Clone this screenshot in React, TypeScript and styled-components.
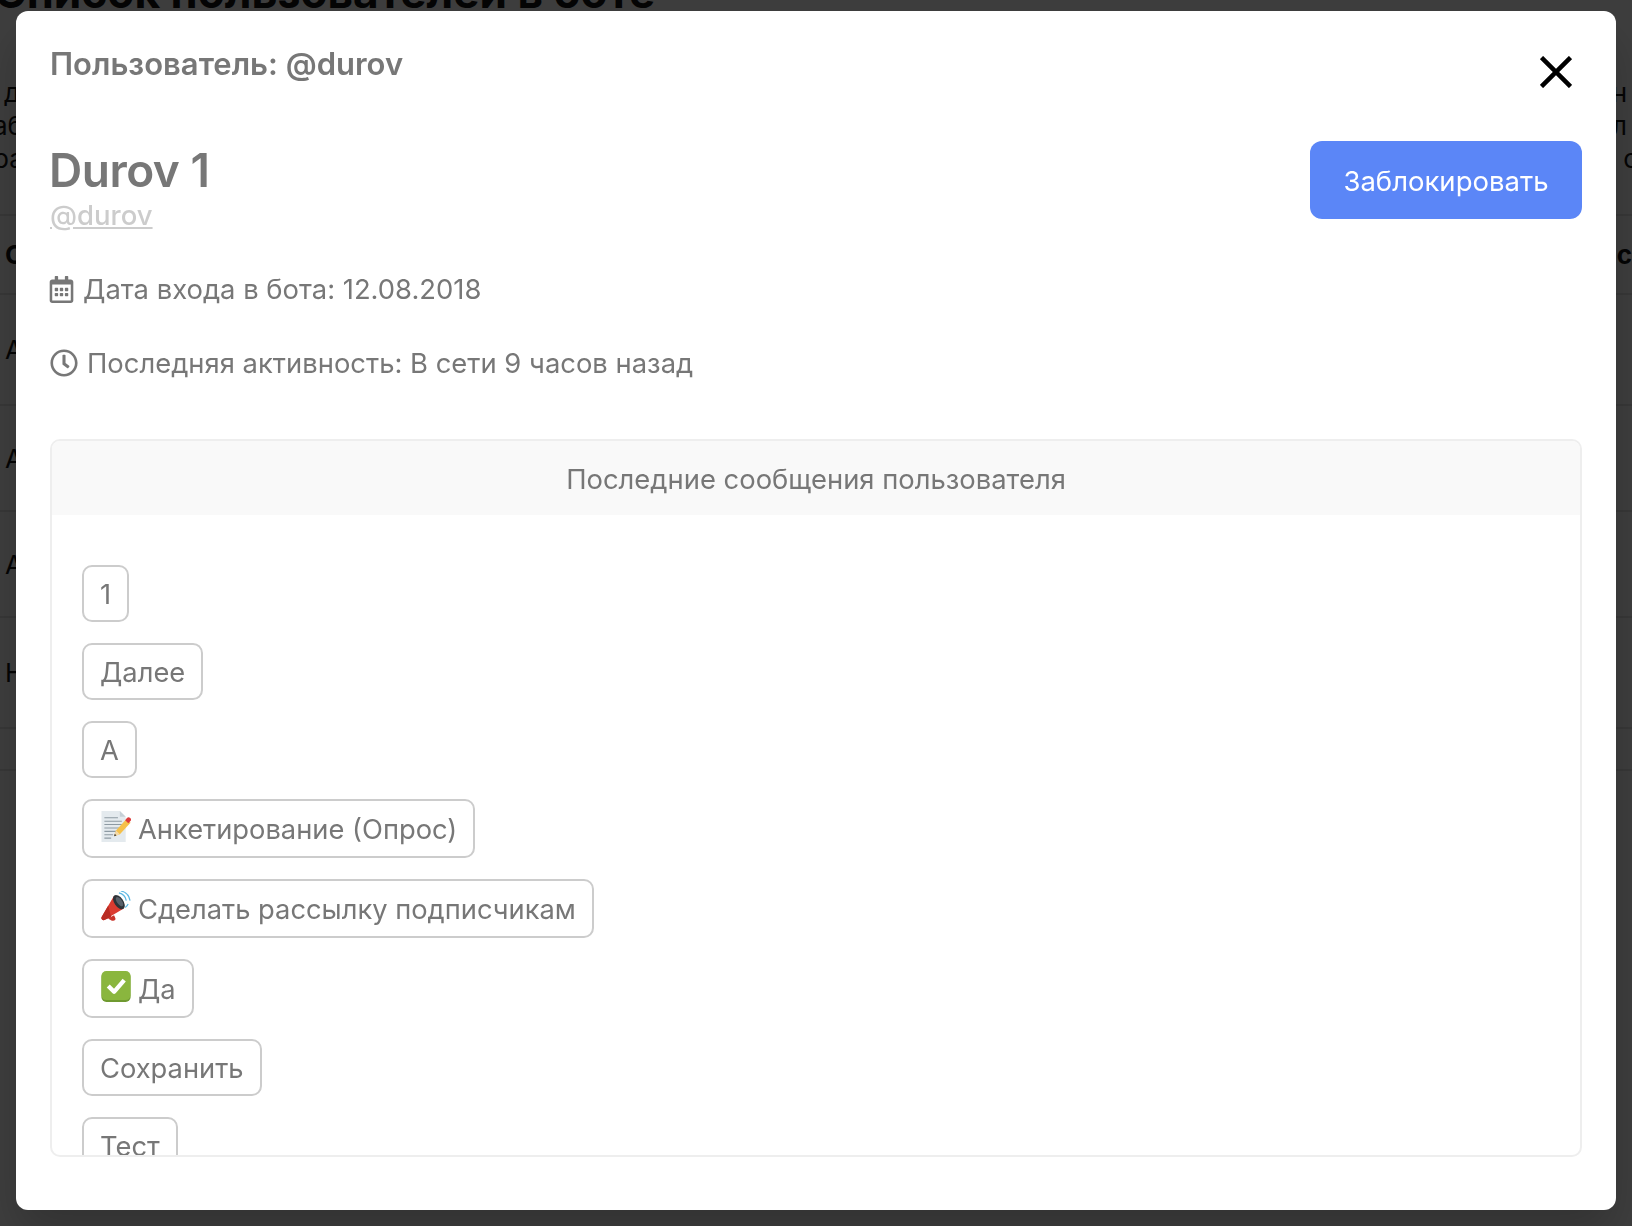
import styled, { createGlobalStyle } from "styled-components";
import { FaRegCalendarAlt, FaRegClock } from "react-icons/fa";

// ── Global ────────────────────────────────────────────────────────────────────

const GlobalStyle = createGlobalStyle`
  html, body {
    margin: 0;
    padding: 0;
    height: 100%;
    overflow: hidden;
    background: #f4f4f4;
    font-family: Inter, "Noto Sans", sans-serif;
  }
  * {
    box-sizing: border-box;
  }
`;

// ── Page behind the modal ─────────────────────────────────────────────────────

const Page = styled.div`
  width: 1632px;
  height: 1226px;
  overflow: hidden;
  background: #f4f4f4;
  color: #111;
`;

const PageTitle = styled.h1`
  margin: -36px 0 0 -6px;
  font-size: 44.2px;
  line-height: 56px;
  font-weight: 700;
  white-space: nowrap;
`;

const Intro = styled.div`
  margin-top: 56px;
  height: 138px;
  display: flex;
  flex-direction: column;
`;

const IntroLine = styled.div<{ $left: number; $right: number }>`
  display: flex;
  justify-content: space-between;
  height: 33px;
  margin: 0 ${({ $right }) => $right}px 0 ${({ $left }) => $left}px;
  font-size: 26px;
  line-height: 33px;
`;

const TableRow = styled.div<{ $height: number; $head?: boolean }>`
  display: flex;
  justify-content: space-between;
  align-items: center;
  height: ${({ $height }) => $height}px;
  padding-left: 5px;
  border-top: 2px solid #dcdcdc;
  font-size: 26px;
  font-weight: ${({ $head }) => ($head ? 700 : 400)};
`;

const Backdrop = styled.div`
  position: fixed;
  inset: 0;
  background: rgba(0, 0, 0, 0.75);
  padding: 11px 16px 16px;
  display: flex;
`;

// ── Modal ─────────────────────────────────────────────────────────────────────

const Modal = styled.div`
  flex: 1;
  min-width: 0;
  display: flex;
  flex-direction: column;
  padding: 34px 34px 53px;
  background: #fff;
  border-radius: 12px;
  box-shadow: 0 24px 48px rgba(0, 0, 0, 0.2);
  color: #777;
`;

const ModalHeader = styled.div`
  display: flex;
  justify-content: space-between;
  align-items: flex-start;
  height: 56px;
  margin-bottom: 40px;
  padding-right: 10px;
`;

const ModalTitle = styled.div`
  font-size: 31px;
  line-height: 38px;
  font-weight: 600;
`;

const CloseButton = styled.button`
  width: 32px;
  height: 32px;
  margin-top: 11px;
  padding: 0;
  border: none;
  background: none;
  display: flex;
`;

const Profile = styled.div`
  display: flex;
  justify-content: space-between;
  align-items: flex-start;
  height: 128px;
`;

const NameBlock = styled.div`
  display: flex;
  flex-direction: column;
  align-items: flex-start;
  padding-top: 1px;
`;

const Name = styled.div`
  margin-left: -1px;
  font-size: 46px;
  line-height: 56px;
  font-weight: 600;
  letter-spacing: -0.5px;
`;

const Handle = styled.a`
  font-size: 27.5px;
  line-height: 34px;
  font-weight: 500;
  color: #ccc;
  text-decoration: underline;
`;

const BlockButton = styled.button`
  width: 272px;
  height: 78px;
  padding: 2px 0 0;
  border: none;
  border-radius: 12px;
  background: #5b86f7;
  color: #fff;
  font-family: inherit;
  font-size: 27.5px;
`;

const InfoRow = styled.div<{ $after: number }>`
  display: flex;
  align-items: center;
  gap: 9px;
  height: 40px;
  margin-bottom: ${({ $after }) => $after}px;
  font-size: 27.4px;
  color: #777;
`;

const CalendarIcon = styled(FaRegCalendarAlt)`
  flex: none;
  width: 27px;
  height: 27px;
  margin: 0 -1px 0 -2px;
`;

const ClockIcon = styled(FaRegClock)`
  flex: none;
  width: 28px;
  height: 28px;
`;

const Panel = styled.div`
  flex: 1;
  min-height: 0;
  overflow: hidden;
  border: 2px solid #eee;
  border-radius: 10px;
`;

const PanelHead = styled.div`
  height: 74px;
  padding-top: 2px;
  display: flex;
  align-items: center;
  justify-content: center;
  background: #f9f9f9;
  font-size: 27.4px;
  color: #777;
`;

const ChipList = styled.div`
  display: flex;
  flex-direction: column;
  align-items: flex-start;
  gap: 21px;
  padding: 50px 30px 0;
`;

const Chip = styled.div<{ $emoji?: boolean }>`
  display: inline-flex;
  align-items: center;
  gap: 7px;
  height: ${({ $emoji }) => ($emoji ? 59 : 57)}px;
  padding: 2px 16px 0;
  border: 2px solid #ccc;
  border-radius: 10px;
  font-size: 27.3px;
  line-height: 51px;
  white-space: nowrap;
`;

const EmojiBox = styled.svg`
  flex: none;
  width: 30px;
  height: 31px;
  margin: -7px 0 0 1px;
`;

// ── Drawn emoji ───────────────────────────────────────────────────────────────

function MemoEmoji() {
  return (
    <EmojiBox viewBox="0 0 30 32">
      <path d="M0 0h19l6 6v26H0z" fill="#e4eaee" />
      <path d="M19 0l6 6h-6z" fill="#c6d0d6" />
      <path
        d="M3 7h14M3 10.5h18M3 14h18M3 17.5h16M3 21h12M3 24.5h9M3 28h7"
        stroke="#8d9aa3"
        strokeWidth="1.1"
      />
      <path d="M13 26l2-6 11-12 4 4-11 12z" fill="#f6c14a" />
      <path d="M13 26l2-6 4 4z" fill="#f3d9a8" />
      <path d="M13 26l.8-2.4 1.6 1.6z" fill="#333" />
      <path d="M24.5 9.5l1.8-2.2a2.4 2.4 0 0 1 3.4 3.4l-2 2z" fill="#dd3b3b" />
    </EmojiBox>
  );
}

function MegaphoneEmoji() {
  return (
    <EmojiBox viewBox="0 0 30 32">
      <path d="M0 27L13 5l10 13-20 12a2.4 2.4 0 0 1-3-3z" fill="#db3b30" />
      <path d="M0 27l7-12 3 12-7 3a2.4 2.4 0 0 1-3-3z" fill="#b92c23" />
      <path d="M7 28l6-3 1.4 3c.6 1.6-1.2 3-3 2.6-1.6-.4-3.2-1.2-4.4-2.6z" fill="#c9332a" />
      <ellipse cx="18" cy="11.5" rx="4.6" ry="8.4" transform="rotate(-35 18 11.5)" fill="#2e3338" />
      <ellipse cx="18.6" cy="11" rx="2.6" ry="5.6" transform="rotate(-35 18.6 11)" fill="#59616a" />
      <path
        d="M18 2c4 .8 6.8 3.6 7.6 8M20 0c5 1 8.5 4.5 9.5 10M24.5 17c1.4-.8 2.4-2 3-3.5"
        fill="none"
        stroke="#5db8e3"
        strokeWidth="1.3"
      />
    </EmojiBox>
  );
}

function CheckEmoji() {
  return (
    <EmojiBox viewBox="0 0 30 32">
      <rect y="1" width="30" height="31" rx="5" fill="#6f9a30" />
      <rect y="0" width="30" height="30" rx="5" fill="#8ab63e" />
      <path d="M7 15.5l6 6L23.5 9.5" fill="none" stroke="#fff" strokeWidth="4.4" strokeLinejoin="round" />
    </EmojiBox>
  );
}

// ── App ───────────────────────────────────────────────────────────────────────

export default function App() {
  return (
    <>
      <GlobalStyle />
      <Page>
        <PageTitle>Список пользователей в боте</PageTitle>
        <Intro>
          <IntroLine $left={4} $right={5}>
            <span>д</span>
            <span>н</span>
          </IntroLine>
          <IntroLine $left={-7} $right={5}>
            <span>аб</span>
            <span>л</span>
          </IntroLine>
          <IntroLine $left={-7} $right={-6}>
            <span>ра</span>
            <span>с</span>
          </IntroLine>
        </Intro>
        <TableRow $height={79} $head>
          <span>С</span>
          <span>ис</span>
        </TableRow>
        <TableRow $height={111}>
          <span>А</span>
        </TableRow>
        <TableRow $height={106}>
          <span>А</span>
        </TableRow>
        <TableRow $height={106}>
          <span>А</span>
        </TableRow>
        <TableRow $height={111}>
          <span>Н</span>
        </TableRow>
        <TableRow $height={42} />
        <TableRow $height={42} />
      </Page>

      <Backdrop>
        <Modal>
          <ModalHeader>
            <ModalTitle>Пользователь: @durov</ModalTitle>
            <CloseButton aria-label="Закрыть">
              <svg width="32" height="32" viewBox="0 0 32 32">
                <path d="M1.5 1.5l29 29M30.5 1.5l-29 29" stroke="#000" strokeWidth="4.5" />
              </svg>
            </CloseButton>
          </ModalHeader>

          <Profile>
            <NameBlock>
              <Name>Durov 1</Name>
              <Handle>@durov</Handle>
            </NameBlock>
            <BlockButton>Заблокировать</BlockButton>
          </Profile>

          <InfoRow $after={34}>
            <CalendarIcon />
            Дата входа в бота: 12.08.2018
          </InfoRow>
          <InfoRow $after={56}>
            <ClockIcon />
            Последняя активность: В сети 9 часов назад
          </InfoRow>

          <Panel>
            <PanelHead>Последние сообщения пользователя</PanelHead>
            <ChipList>
              <Chip>1</Chip>
              <Chip>Далее</Chip>
              <Chip>А</Chip>
              <Chip $emoji>
                <MemoEmoji />
                Анкетирование (Опрос)
              </Chip>
              <Chip $emoji>
                <MegaphoneEmoji />
                Сделать рассылку подписчикам
              </Chip>
              <Chip $emoji>
                <CheckEmoji />
                Да
              </Chip>
              <Chip>Сохранить</Chip>
              <Chip>Тест</Chip>
            </ChipList>
          </Panel>
        </Modal>
      </Backdrop>
    </>
  );
}
